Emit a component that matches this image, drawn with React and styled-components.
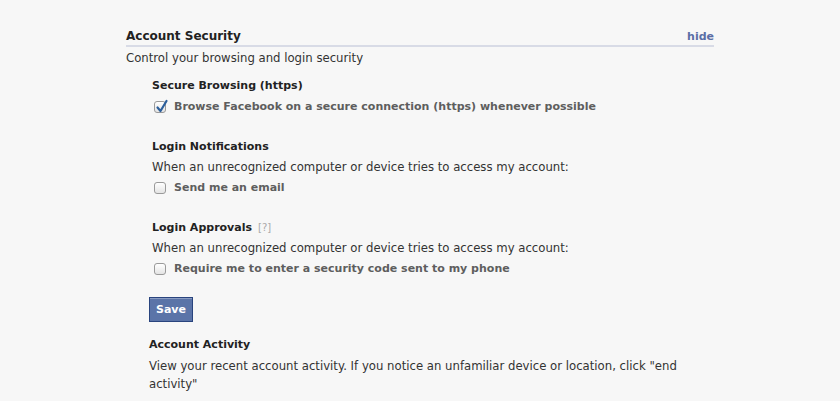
import styled, { createGlobalStyle } from 'styled-components';

const Global = createGlobalStyle`
  html, body {
    margin: 0;
    padding: 0;
    background: #f7f7f7;
  }
  body {
    font-family: "DejaVu Sans", "Liberation Sans", sans-serif;
    font-size: 11.7px;
    color: #333;
  }
`;

const Page = styled.div`
  width: 588px;
  margin: 0 auto;
  padding-top: 29px;
`;

const Header = styled.div`
  display: flex;
  justify-content: space-between;
  align-items: flex-end;
  padding-bottom: 2px;
  border-bottom: 2px solid #d8dbe6;
`;

const Title = styled.h2`
  margin: 0;
  font-size: 12px;
  font-weight: bold;
  color: #222;
`;

const HideLink = styled.a`
  color: #5b6ea6;
  font-weight: bold;
  font-size: 11px;
  text-decoration: none;
  cursor: pointer;
`;

const Intro = styled.p`
  margin: 4px 0 0;
  color: #333;
`;

const Section = styled.div`
  padding-left: ${(p) => p.$indent || 26}px;
  margin-top: ${(p) => p.$top || 0}px;
`;

const SectionTitle = styled.h3`
  margin: 0;
  font-size: 11px;
  font-weight: bold;
  color: #222;
  display: flex;
  align-items: baseline;
  gap: 6px;
`;

const Help = styled.span`
  font-weight: normal;
  font-size: 10px;
  color: #aaa;
`;

const Desc = styled.p`
  margin: ${(p) => p.$top || 5}px 0 0;
  color: #333;
  line-height: 18px;
`;

const Option = styled.label`
  display: flex;
  align-items: center;
  gap: 8px;
  margin-top: ${(p) => p.$top || 5}px;
  padding-left: 2px;
  font-size: 11px;
  font-weight: bold;
  color: #5e5e5e;
  cursor: pointer;
`;

const Box = styled.span`
  width: 12px;
  height: 12px;
  box-sizing: border-box;
  border: 1px solid #9a9a9a;
  border-radius: 3px;
  background: linear-gradient(#ffffff, #e4e4e4);
  position: relative;
  flex-shrink: 0;

  svg {
    position: absolute;
    left: 0;
    top: -3px;
  }
`;

const SaveButton = styled.button`
  font-family: inherit;
  font-size: 11px;
  font-weight: bold;
  color: #fff;
  background: #5b74a8;
  border: 1px solid #29447e;
  box-shadow: inset 0 1px 0 #8a9cc2;
  padding: 5px 6px 5px;
  cursor: pointer;
`;

const Checkbox = ({ checked }) => (
  <Box>
    {checked && (
      <svg width="14" height="15" viewBox="0 0 14 15">
        <path d="M2.5 8.5 L5.5 12 L11.5 2" fill="none" stroke="#2c5f9c" strokeWidth="2.2" strokeLinecap="round" strokeLinejoin="round" />
      </svg>
    )}
  </Box>
);

export default function App() {
  return (
    <>
      <Global />
      <Page>
        <Header>
          <Title>Account Security</Title>
          <HideLink>hide</HideLink>
        </Header>
        <Intro>Control your browsing and login security</Intro>

        <Section $top={14}>
          <SectionTitle>Secure Browsing (https)</SectionTitle>
          <Option $top={8}>
            <Checkbox checked />
            Browse Facebook on a secure connection (https) whenever possible
          </Option>
        </Section>

        <Section $top={27}>
          <SectionTitle>Login Notifications</SectionTitle>
          <Desc>When an unrecognized computer or device tries to access my account:</Desc>
          <Option>
            <Checkbox />
            Send me an email
          </Option>
        </Section>

        <Section $top={27}>
          <SectionTitle>
            Login Approvals <Help>[?]</Help>
          </SectionTitle>
          <Desc>When an unrecognized computer or device tries to access my account:</Desc>
          <Option>
            <Checkbox />
            Require me to enter a security code sent to my phone
          </Option>
        </Section>

        <Section $indent={23} $top={22}>
          <SaveButton>Save</SaveButton>
        </Section>

        <Section $indent={23} $top={16}>
          <SectionTitle>Account Activity</SectionTitle>
          <Desc $top={6}>
            View your recent account activity. If you notice an unfamiliar device or location, click "end activity"
          </Desc>
        </Section>
      </Page>
    </>
  );
}
